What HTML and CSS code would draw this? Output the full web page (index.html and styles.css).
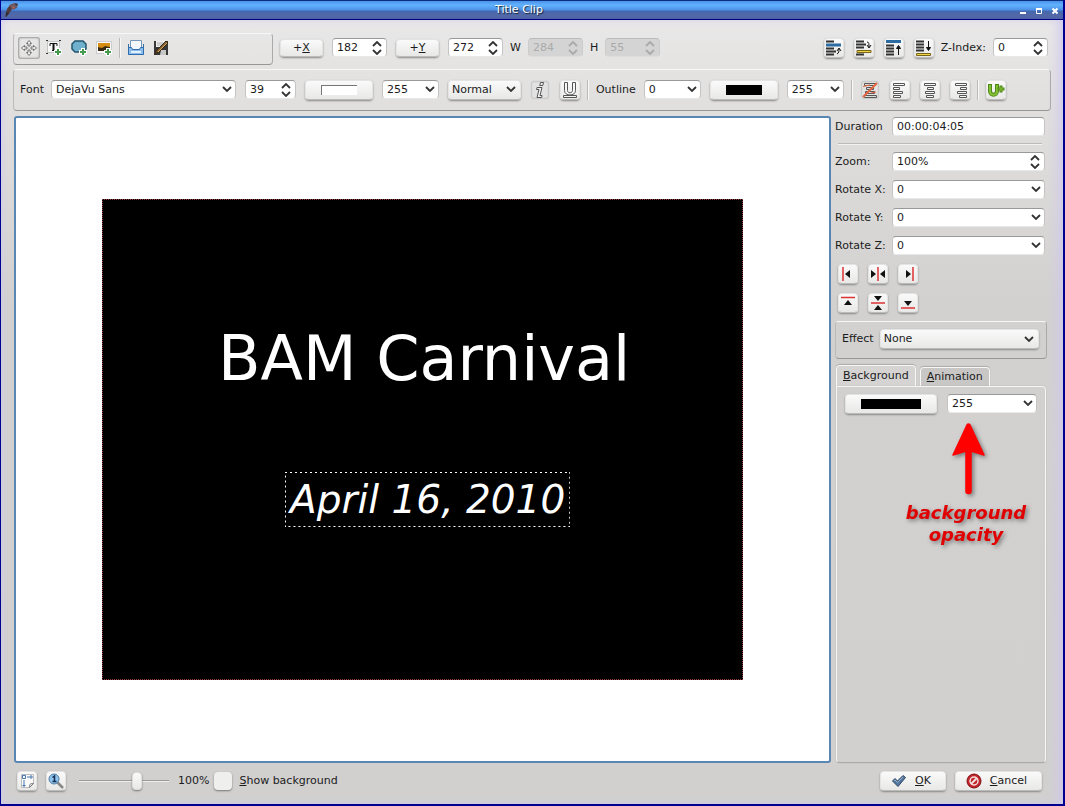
FILE: index.html
```html
<!DOCTYPE html>
<html lang="en">
<head>
<meta charset="utf-8">
<title>Title Clip</title>
<link rel="stylesheet" href="styles.css">
</head>
<body>
<div class="window">
  <header class="titlebar">
    <svg class="app-icon" width="16" height="18" viewBox="0 0 16 18"><path d="M2 16 4 8l3-4 3 1-2 5-4 5z" fill="#553c3c"/><path d="M6 4 11 2l4 1-1 4-4 2z" fill="#6d5a62"/><path d="M9 5l3 1-2 2z" fill="#b0605a"/><path d="M12 2l3 1-2 2z" fill="#334"/><path d="M3 11l3 1-3 4z" fill="#2e2b38"/></svg>
    <h1 class="title">Title Clip</h1>
    <div class="window-buttons">
      <button class="wb" aria-label="Minimize"><svg width="8" height="9" viewBox="0 0 8 9"><path d="M1 7h6" stroke="#fff" stroke-width="2"/></svg></button>
      <button class="wb" aria-label="Maximize"><svg width="8" height="9" viewBox="0 0 8 9"><path d="M1.500 3v4.500h5V3" stroke="#fff" fill="none"/><path d="M1 3h6" stroke="#fff" stroke-width="2"/></svg></button>
      <button class="wb" aria-label="Close"><svg width="8" height="9" viewBox="0 0 8 9"><path d="M1.500 2.500l5 5m0-5l-5 5" stroke="#fff" stroke-width="2"/></svg></button>
    </div>
  </header>

  <div class="content">
    <div class="row-tools">
      <div class="frame tool-frame">
        <button class="tool pressed" aria-label="Select"><svg width="18" height="18" viewBox="0 0 18 18" fill="#f4f4f4" stroke="#666" stroke-width=".9"><path d="M9 1.500 11.500 4.500H10V7H8V4.500H6.500zM9 16.500 11.500 13.500H10V11H8v2.500H6.500zM1.500 9 4.500 6.500V8H7v2H4.500v1.500zM16.500 9 13.500 6.500V8H11v2h2.500v1.500z"/></svg></button>
        <button class="tool" aria-label="Add text"><svg width="18" height="18" viewBox="0 0 18 18"><path d="M2.500 2.500h12v11h-12z" fill="#f8f8f8" stroke="#999" stroke-dasharray="1 1"/><path d="M1 1.500h2M14 1.500h2M1 14.500h2" stroke="#333"/><path d="M5 7V4.500h7V7M5.500 4.500h6M7 11.500h3" stroke="#111" fill="none"/><path d="M8.500 4v7.500" stroke="#111" stroke-width="2"/><path d="M13 9v8M9 13h8" stroke="#fff" stroke-width="4"/><path d="M13 10v6M10 13h6" stroke="#459a4d" stroke-width="2"/></svg></button>
        <button class="tool" aria-label="Add shape"><svg width="18" height="18" viewBox="0 0 18 18"><path d="M5 2h8l3 3v5l-3 3H5l-3-3V5z" fill="#6fb0cc" stroke="#23566e" stroke-width="1.500"/><path d="M13 9v8M9 13h8" stroke="#fff" stroke-width="4"/><path d="M13 10v6M10 13h6" stroke="#459a4d" stroke-width="2"/></svg></button>
        <button class="tool" aria-label="Add image"><svg width="18" height="18" viewBox="0 0 18 18"><rect x="1.500" y="2.500" width="15" height="12" fill="#fafafa" stroke="#ccc"/><rect x="3" y="4" width="12" height="8" fill="#f0a91c"/><path d="M3 4h12v3l-5 0-3 2-4-1z" fill="#d78c12"/><path d="M3 8l4 1 3-2 5 1v4H3z" fill="#3a2b10"/><path d="M13 9v8M9 13h8" stroke="#fff" stroke-width="4"/><path d="M13 10v6M10 13h6" stroke="#459a4d" stroke-width="2"/></svg></button>
        <span class="sep"></span>
        <button class="tool" aria-label="Open template"><svg width="18" height="18" viewBox="0 0 18 18"><path d="M3.500 1.500h11v9h-11z" fill="#f3f7fb" stroke="#7798b5"/><path d="M1.500 5v10.500h15V5" fill="none" stroke="#2f6dad"/><path d="M1.500 8.500h3l1 2h7l1-2h3v7h-15z" fill="#8abdec" stroke="#2f6dad"/><path d="M4 13h10" stroke="#e2f0fd" stroke-width="2"/></svg></button>
        <button class="tool" aria-label="Save template"><svg width="18" height="18" viewBox="0 0 18 18"><path d="M2 2h14v14H2z" fill="#373737"/><path d="M4 2h9v6H4z" fill="#eee"/><path d="M5 4h6M5 6h6" stroke="#aaa"/><path d="M9 11h5v5H8z" fill="#c8c8c8"/><path d="M3 15 5 11 14 2l2 2-9 9z" fill="#85633a" stroke="#392611"/><path d="M6 13 15 4" stroke="#d6a85a"/></svg></button>
      </div>
      <div class="group position-group">
        <button class="btn axis">+<u>X</u></button>
        <input class="field spin w55" value="182" aria-label="X position">
        <button class="btn axis">+<u>Y</u></button>
        <input class="field spin w55" value="272" aria-label="Y position">
        <label class="size-label" for="w">W</label>
        <input class="field spin w55" id="w" value="284" disabled>
        <label class="size-label" for="h">H</label>
        <input class="field spin w55" id="h" value="55" disabled>
      </div>
      <div class="group z-group">
        <button class="btn icon" aria-label="Raise object"><svg width="16" height="16" viewBox="0 0 16 16"><path d="M0 1.500h8M0 8.500h8M0 11.500h10M0 14.500h8" stroke="#333" stroke-width="2"/><path d="M0 5h15" stroke="#2d6ba3" stroke-width="3"/><path d="M11 14c2-1 2-3 2-5M11 11l2-3 2 3" fill="none" stroke="#111"/></svg></button>
        <button class="btn icon" aria-label="Lower object"><svg width="16" height="16" viewBox="0 0 16 16"><path d="M0 1.500h8M0 4.500h10M0 7.500h8M0 14.500h8" stroke="#333" stroke-width="2"/><path d="M1 10.500h14v2H1z" fill="#f2d541" stroke="#77651c"/><path d="M11 2c2 0 2 2 2 5M11 5l2 3 2-3" fill="none" stroke="#111"/></svg></button>
        <button class="btn icon" aria-label="Raise to top"><svg width="16" height="16" viewBox="0 0 16 16"><path d="M0 1.500h15" stroke="#2d6ba3" stroke-width="3"/><path d="M0 5.500h8M0 8.500h8M0 11.500h8M0 14.500h8" stroke="#333" stroke-width="2"/><path d="M12.500 15V6M10.500 8.500l2-3 2 3z" fill="#111" stroke="#111"/></svg></button>
        <button class="btn icon" aria-label="Lower to bottom"><svg width="16" height="16" viewBox="0 0 16 16"><path d="M0 1.500h8M0 4.500h8M0 7.500h8M0 10.500h8" stroke="#333" stroke-width="2"/><path d="M.5 13.500h14v2H.5z" fill="#f2d541" stroke="#77651c"/><path d="M12.500 1v9M10.500 7.500l2 3 2-3z" fill="#111" stroke="#111"/></svg></button>
        <label class="z-label" for="z">Z-Index:</label>
        <input class="field spin w55" id="z" value="0">
      </div>
    </div>

    <div class="frame row-font">
      <div class="group font-group">
        <label for="font">Font</label>
        <select class="field font-select" id="font"><option>DejaVu Sans</option></select>
      </div>
      <input class="field spin w51" value="39" aria-label="Font size">
      <button class="btn color" aria-label="Font color"><span class="swatch white"></span></button>
      <select class="field w57" aria-label="Font opacity"><option>255</option></select>
      <select class="btn weight" aria-label="Font weight"><option>Normal</option></select>
      <div class="group style-group">
        <button class="btn icon flat" aria-label="Italic"><svg width="16" height="18" viewBox="0 0 16 18"><path d="M8.500 1.500h3l-.7 3h-3zM5 6.500h5l-2 8h2l-.3 2H5l2-8H4.500z" fill="#f2f2f2" stroke="#555"/></svg></button>
        <button class="btn icon" aria-label="Underline"><svg width="16" height="18" viewBox="0 0 16 18"><path d="M2.500 1.500h3v8c0 3 5 3 5 0v-8h3v8c0 6-11 6-11 0z" fill="#f6f6f6" stroke="#555"/><path d="M1.500 14.500h13v2h-13z" fill="#f6f6f6" stroke="#555"/></svg></button>
      </div>
      <span class="sep tight"></span>
      <div class="group">
        <label for="outline">Outline</label>
        <select class="field w57" id="outline"><option>0</option></select>
      </div>
      <button class="btn color" aria-label="Outline color"><span class="swatch black"></span></button>
      <select class="field w57" aria-label="Outline opacity"><option>255</option></select>
      <span class="sep tight"></span>
      <div class="group style-group">
        <button class="btn icon flat" aria-label="No alignment"><svg width="18" height="18" viewBox="0 0 18 18"><path d="M3.500 2.500h11v2h-11zM5.500 6.500h7v2h-7zM4.500 10.500h9v2h-9zM3.500 14.500h12v2h-12z" fill="#ddd" stroke="#555"/><path d="M2 16 16 2" stroke="#e5633f" stroke-width="2"/><path d="M2 5.500 9 4M10 12l5-1" stroke="#e5633f"/></svg></button>
        <button class="btn icon" aria-label="Align left"><svg width="18" height="18" viewBox="0 0 18 18"><path d="M2.500 2.500h11v2h-11zM2.500 6.500h6v2h-6zM2.500 10.500h9v2h-9zM2.500 14.500h7v2h-7z" fill="#fafafa" stroke="#555"/></svg></button>
        <button class="btn icon" aria-label="Align center"><svg width="18" height="18" viewBox="0 0 18 18"><path d="M3.500 2.500h11v2h-11zM6.500 6.500h6v2h-6zM4.500 10.500h9v2h-9zM5.500 14.500h7v2h-7z" fill="#fafafa" stroke="#555"/></svg></button>
        <button class="btn icon" aria-label="Align right"><svg width="18" height="18" viewBox="0 0 18 18"><path d="M4.500 2.500h11v2h-11zM9.500 6.500h6v2h-6zM6.500 10.500h9v2h-9zM8.500 14.500h7v2h-7z" fill="#fafafa" stroke="#555"/></svg></button>
      </div>
      <span class="sep tight"></span>
      <button class="btn icon" aria-label="Insert Unicode character"><svg width="18" height="18" viewBox="0 0 18 18"><path d="M3 3v7c0 5 7 5 7 0V3" fill="none" stroke="#4f8618" stroke-width="4"/><path d="M3 4v6c0 5 7 5 7 0v-6" fill="none" stroke="#84c235" stroke-width="2"/><path d="M14 4.500v7M10.500 8H17.500" stroke="#4f8618" stroke-width="3"/><path d="M14 5.500v5M11.500 8h5" stroke="#84c235"/></svg></button>
    </div>

    <div class="main">
      <div class="canvas">
        <div class="scene">
          <div class="item headline">BAM Carnival</div>
          <div class="item dateline">April 16, 2010<svg class="marquee" width="100%" height="100%"><rect x="0" y="0" width="100%" height="100%" fill="none" stroke="#fff" stroke-width="2" stroke-dasharray="2 3"/></svg></div>
        </div>
      </div>
      <div class="splitter"></div>
      <aside class="side">
        <div class="form">
          <label for="dur">Duration</label>
          <input class="field" id="dur" value="00:00:04:05">
        </div>
        <hr class="rule">
        <div class="form">
          <label for="zoom">Zoom:</label>
          <input class="field spin" id="zoom" value="100%">
          <label for="rx">Rotate X:</label>
          <select class="field" id="rx"><option>0</option></select>
          <label for="ry">Rotate Y:</label>
          <select class="field" id="ry"><option>0</option></select>
          <label for="rz">Rotate Z:</label>
          <select class="field" id="rz"><option>0</option></select>
        </div>
        <div class="snap">
          <button class="btn icon" aria-label="Snap left"><svg width="18" height="18" viewBox="0 0 18 18"><path d="M4 2v14" stroke="#d33" stroke-width="1.500"/><path d="M11 5v8L6 9z" fill="#111"/></svg></button>
          <button class="btn icon" aria-label="Center horizontally"><svg width="18" height="18" viewBox="0 0 18 18"><path d="M9 2v14" stroke="#d33" stroke-width="1.500"/><path d="M2 5v8l5-4zM16 5v8l-5-4z" fill="#111"/></svg></button>
          <button class="btn icon" aria-label="Snap right"><svg width="18" height="18" viewBox="0 0 18 18"><path d="M14 2v14" stroke="#d33" stroke-width="1.500"/><path d="M7 5v8l5-4z" fill="#111"/></svg></button>
          <button class="btn icon" aria-label="Snap top"><svg width="18" height="18" viewBox="0 0 18 18"><path d="M2 3.500h14" stroke="#d33" stroke-width="1.500"/><path d="M5 11h8L9 6z" fill="#111"/></svg></button>
          <button class="btn icon" aria-label="Center vertically"><svg width="18" height="18" viewBox="0 0 18 18"><path d="M2 9h14" stroke="#d33" stroke-width="1.500"/><path d="M5 2h8L9 7zM5 16h8l-4-5z" fill="#111"/></svg></button>
          <button class="btn icon" aria-label="Snap bottom"><svg width="18" height="18" viewBox="0 0 18 18"><path d="M2 14h14" stroke="#d33" stroke-width="1.500"/><path d="M5 7h8l-4 5z" fill="#111"/></svg></button>
        </div>
        <div class="frame effect">
          <label for="effect">Effect</label>
          <select class="btn effect-select" id="effect"><option>None</option></select>
        </div>
        <div class="tabs" role="tablist">
          <button class="tab active" role="tab" aria-selected="true"><u>B</u>ackground</button>
          <button class="tab" role="tab" aria-selected="false"><u>A</u>nimation</button>
        </div>
        <div class="tab-panel" role="tabpanel">
          <div class="bg-row">
            <button class="btn bg-color" aria-label="Background color"><span class="swatch black wide"></span></button>
            <select class="field bg-opacity" aria-label="Background opacity"><option>255</option></select>
          </div>
          <div class="callout">
            <svg class="callout-arrow" width="40" height="78" viewBox="0 0 40 78"><path d="M19 3 5 33 18 29V69a2 2 0 0 0 5 0V29L36 33 22 3Q20.500 1 19 3z" fill="#f00" stroke="#f00" stroke-width="1.500" stroke-linejoin="round"/></svg>
            <p class="callout-text">background<br>opacity</p>
          </div>
        </div>
      </aside>
    </div>

    <footer class="footer">
      <button class="btn icon" aria-label="Fit zoom"><svg width="18" height="18" viewBox="0 0 18 18"><path d="M3.500 2.500h12v9l-4 4h-8z" fill="#fafafa" stroke="#bbb"/><path d="M4.500 3.500h3v3h-3zM9 5h6M6 8v7M13 3v4M4.500 13.500h3" fill="none" stroke="#4876ae"/><path d="M11.500 15.500c0-3 0-4 4-4z" fill="#eee" stroke="#777"/></svg></button>
      <button class="btn icon" aria-label="Original size"><svg width="18" height="18" viewBox="0 0 18 18"><path d="M10 10l6 6" stroke="#888" stroke-width="2.500"/><circle cx="7" cy="7" r="5" fill="#8fc3ea" stroke="#4f7ea8"/><path d="M5.500 5.500 7.500 4v5.500M5.500 9.500h4" stroke="#162f55" stroke-width="1.500" fill="none"/></svg></button>
      <input class="slider" type="range" min="0" max="100" value="66" aria-label="Zoom">
      <output class="percent">100%</output>
      <input class="check" type="checkbox" id="showbg">
      <label for="showbg"><u>S</u>how background</label>
      <button class="btn action ok"><svg width="16" height="16" viewBox="0 0 16 16"><path d="M1.500 8 4 5.500 6.500 8 12 2.500 14.500 4.500 7 13.500z" fill="#54779f" stroke="#2f4763"/><path d="M3 8l1-1 2.500 2.500L12 4" fill="none" stroke="#8eabc9"/></svg><span><u>O</u>K</span></button>
      <button class="btn action cancel"><svg width="16" height="16" viewBox="0 0 16 16"><circle cx="8" cy="8" r="7" fill="#c3252a" stroke="#7d1115"/><circle cx="8" cy="8" r="4" fill="none" stroke="#f3dede" stroke-width="1.500"/><path d="M5 11l6-6" stroke="#f3dede" stroke-width="2"/></svg><span><u>C</u>ancel</span></button>
    </footer>
  </div>
</div>
</body>
</html>
```
FILE: styles.css
```css
* { box-sizing: border-box; }

:root {
  --chevron: url("data:image/svg+xml,%3Csvg xmlns='http://www.w3.org/2000/svg' width='10' height='7'%3E%3Cpath d='M1 1l4 4 4-4' fill='none' stroke='%23333' stroke-width='1.8'/%3E%3C/svg%3E");
  --spin: url("data:image/svg+xml,%3Csvg xmlns='http://www.w3.org/2000/svg' width='10' height='14'%3E%3Cpath d='M1 5l4-4 4 4M1 9l4 4 4-4' fill='none' stroke='%23333' stroke-width='1.8'/%3E%3C/svg%3E");
  --spin-off: url("data:image/svg+xml,%3Csvg xmlns='http://www.w3.org/2000/svg' width='10' height='14'%3E%3Cpath d='M1 5l4-4 4 4M1 9l4 4 4-4' fill='none' stroke='%23aaa' stroke-width='1.8'/%3E%3C/svg%3E");
}

body {
  margin: 0;
  color: #1b1b1b;
  font: 11px/14px "DejaVu Sans", sans-serif;
}

button, input, select { font: inherit; color: inherit; }
svg { display: block; flex: none; }

.window {
  display: flex;
  flex-direction: column;
  min-height: 100vh;
  border: solid #000090;
  border-width: 0 2px 2px 1px;
  background: linear-gradient(#ebeaea 0, #e0dfde 110px, #d2d1d0 300px, #d1d0cf);
}

.titlebar {
  display: flex;
  align-items: center;
  height: 20px;
  padding: 0 4px 0 2px;
  border-top: 1px solid #0a2f80;
  border-bottom: 1px solid #00007c;
  background: linear-gradient(#4a92e8, #62b2ff 4px, #4b92e6 9px, #4468b0 10px, #5468a4 15px, #4c62ae);
}
.title {
  flex: 1;
  margin: 0;
  color: #fff;
  font-size: 11px;
  font-weight: normal;
  text-align: center;
  text-shadow: 1px 1px 1px #123;
}
.window-buttons { display: flex; gap: 8px; }
.wb { padding: 0; border: 0; background: none; }

.content {
  display: flex;
  flex: 1;
  flex-direction: column;
  padding: 13px 12px 12px;
  box-shadow: inset 4px 0 8px -4px #cfc8ee, inset -8px 0 12px -4px #cfc8ee;
}

.frame {
  border: 1px solid #f7f7f7;
  border-bottom-color: #989796;
  border-left-color: #bbb;
  border-right-color: #aaa;
  border-radius: 4px;
}
.row-tools { display: flex; align-items: center; gap: 7px; }
.tool-frame {
  display: flex;
  align-items: center;
  gap: 3px;
  width: 260px;
  height: 32px;
  padding: 0 4px 3px;
}
.tool {
  display: grid;
  place-items: center;
  width: 22px;
  height: 22px;
  padding: 0;
  border: 0;
  border-radius: 3px;
  background: none;
}
.tool.pressed { box-shadow: inset 0 0 2px 1px #999; }
.sep {
  width: 2px;
  height: 20px;
  margin: 0 1px;
  border-left: 1px solid #bbb;
  border-right: 1px solid #f8f8f8;
}
.sep.tight { margin: 0 -2px; }
.group { display: flex; align-items: center; gap: 8px; }
.position-group { gap: 9px; padding-bottom: 3px; }
.size-label { margin: 0 -2px; }
.style-group, .z-group { gap: 10px; }
.z-group { margin-left: auto; padding: 0 3px 3px 0; }
.z-label { margin: 0 -3px; }
.font-group { gap: 7px; }

.field {
  appearance: none;
  height: 19px;
  min-width: 0;
  margin: 0;
  padding: 0 4px;
  border: 1px solid #c4c4c4;
  border-top-color: #999;
  border-bottom-color: #e8e8e8;
  border-radius: 4px;
  background: #fff;
}
select.field { background: #fff var(--chevron) no-repeat right 3px center; }
.spin { background: #fff var(--spin) no-repeat right 4px center; }
.field:disabled {
  border-color: #bbb #ccc #ddd;
  background: #d5d4d4 var(--spin-off) no-repeat right 4px center;
  color: #aaa;
}
.w51 { width: 51px; }
.w55 { width: 55px; }
.w57 { width: 57px; }

.btn {
  appearance: none;
  display: flex;
  align-items: center;
  justify-content: center;
  height: 20px;
  padding: 0;
  border: 1px solid #e4e4e4;
  border-bottom-color: #bbb;
  border-radius: 4px;
  background: linear-gradient(#fafafa, #e8e8e7);
  box-shadow: 0 1px 2px #888;
}
.axis { width: 43px; height: 18px; }
.icon { width: 20px; height: 20px; }
.flat { background: #e2e2e2; box-shadow: inset 0 0 2px #888; border-color: #ddd; }
.color { width: 68px; }
.swatch { width: 36px; height: 10px; }
.swatch.white { border: solid #777; border-width: 1px 0 0 1px; background: #fff; }
.swatch.black { background: #000; }
.swatch.wide { width: 60px; }

select.btn {
  padding: 0 3px;
  background: var(--chevron) no-repeat right 4px center, linear-gradient(#fafafa, #e8e8e7);
}

.row-font {
  display: flex;
  align-items: center;
  gap: 9px;
  height: 42px;
  margin-top: 4px;
  padding: 0 6px 1px;
}
.font-select { width: 185px; }
.weight { width: 73px; }

.main { display: flex; flex: 1; margin-top: 5px; }
.canvas {
  display: grid;
  flex: 1;
  place-items: center;
  margin-left: 1px;
  border: 2px solid #5a86b4;
  border-radius: 3px;
  background: #fff;
}
.scene {
  position: relative;
  width: 641px;
  height: 481px;
  border: 1px dotted #8c3a3a;
  background: #000;
}
.item { position: absolute; color: #fff; white-space: nowrap; }
.headline { left: 115px; top: 123px; font-size: 62px; line-height: 72px; }
.dateline {
  left: 182px;
  top: 272px;
  padding: 5px;
  font-size: 39px;
  font-style: italic;
  line-height: 45px;
}
.marquee { position: absolute; inset: 0; }
.splitter { width: 4px; }

.side { display: flex; flex-direction: column; width: 212px; margin-right: 4px; }
.form {
  display: grid;
  grid-template-columns: 57px 1fr;
  row-gap: 9px;
  align-items: center;
  padding-right: 2px;
}
.form:first-child { padding-top: 1px; }
.rule {
  width: 204px;
  margin: 7px 0 7px 3px;
  border: solid;
  border-width: 1px 0;
  border-color: #bbb #f2f2f2 #f2f2f2;
}
.snap {
  display: grid;
  grid-template-columns: repeat(3, 20px);
  gap: 9px 10px;
  margin: 9px 0 8px 3px;
}
.effect {
  display: flex;
  align-items: center;
  gap: 6px;
  height: 38px;
  padding: 0 7px 2px 6px;
}
.effect-select { flex: 1; }

.tabs { display: flex; align-items: flex-end; gap: 4px; margin: 6px 0 0 1px; }
.tab {
  height: 19px;
  padding: 0 6px;
  border: 1px solid #f7f7f7;
  border-bottom: 0;
  border-radius: 4px 4px 0 0;
  background: #c8c7c6;
  box-shadow: 0 -1px 1px #aaa;
}
.tab.active { height: 21px; background: #d5d4d3; }
.tab-panel {
  flex: 1;
  margin: 0 1px;
  border: 1px solid #f5f5f5;
  border-bottom-color: #aaa;
  border-radius: 0 4px 4px 4px;
  box-shadow: 0 0 1px #888;
}
.bg-row { display: flex; gap: 10px; padding: 7px 8px 0 8px; }
.bg-color { width: 92px; }
.bg-opacity { width: 90px; }
.callout {
  display: flex;
  flex-direction: column;
  align-items: center;
  padding: 8px 0 0 50px;
  filter: drop-shadow(2px 2px 2px #777);
}
.callout-arrow { margin-left: 4px; }
.callout-text {
  margin: 2px 0 0;
  color: #e10000;
  font: italic bold 18px/22px "DejaVu Sans", sans-serif;
  text-align: center;
}

.footer { display: flex; align-items: center; gap: 9px; height: 22px; margin: 7px 9px 0 4px; }
.slider { appearance: none; width: 90px; height: 20px; margin: 0 0 0 4px; background: none; }
.slider::-webkit-slider-runnable-track { height: 2px; background: linear-gradient(#999 50%, #eee 50%); }
.slider::-webkit-slider-thumb {
  appearance: none;
  width: 10px;
  height: 18px;
  margin-top: -8px;
  border: 1px solid #ddd;
  border-radius: 4px;
  background: linear-gradient(#fafafa, #e8e8e7);
  box-shadow: 0 1px 2px #777;
}
.check {
  appearance: none;
  width: 18px;
  height: 18px;
  margin: 0 -2px 0 -4px;
  border-radius: 4px;
  background: #efefee;
  box-shadow: 0 1px 2px #777;
}
.action { gap: 8px; }
.ok { width: 66px; margin-left: auto; }
.cancel { width: 87px; }
.ok, .cancel { padding-right: 4px; }
```
